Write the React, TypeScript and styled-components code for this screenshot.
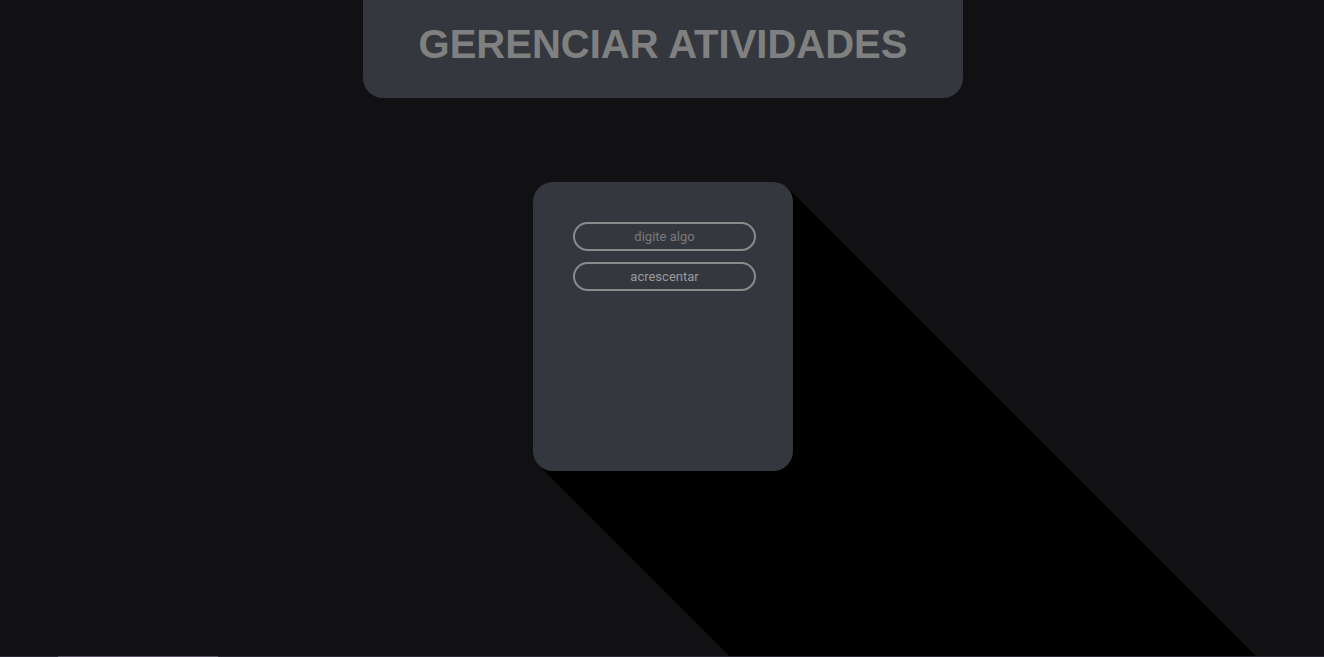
import React from "react";
import styled, { createGlobalStyle } from "styled-components";

const longShadow = Array.from({ length: 700 }, (_, i) => `${i + 1}px ${i + 1}px 0 #000`).join(", ");

const Global = createGlobalStyle`
  html, body { margin: 0; padding: 0; background: #111114; overflow: hidden; }
  body { font-family: "Liberation Sans", Arial, sans-serif; }
`;

const Page = styled.div`
  min-height: 657px;
  padding-left: 2px;
  display: flex;
  flex-direction: column;
  align-items: center;
`;

const Header = styled.header`
  width: 600px;
  height: 98px;
  background: #34383e;
  border-radius: 0 0 20px 20px;
  display: flex;
  align-items: center;
  justify-content: center;
  position: relative;
  z-index: 2;
`;

const Title = styled.h1`
  margin: 0;
  font-family: "Liberation Sans", Arial, sans-serif;
  font-weight: 700;
  font-size: 40px;
  color: #808080;
  padding-bottom: 10px;
`;

const Card = styled.div`
  margin-top: 84px;
  width: 260px;
  height: 289px;
  box-sizing: border-box;
  padding: 40px;
  background: #34383e;
  border-radius: 20px;
  display: flex;
  flex-direction: column;
  gap: 11px;
  box-shadow: ${longShadow};
`;

const Pill = styled.input`
  width: 183px;
  height: 29px;
  box-sizing: border-box;
  border: 2px solid #8a8a8a;
  border-radius: 15px;
  background: transparent;
  font-family: Roboto, "Liberation Sans", sans-serif;
  font-size: 13px;
  text-align: center;
  color: #999;
  outline: none;
  padding: 0;
  &::placeholder { color: #7a7a7a; }
`;

const PillButton = styled.button`
  width: 183px;
  height: 29px;
  box-sizing: border-box;
  border: 2px solid #8a8a8a;
  border-radius: 15px;
  background: transparent;
  font-family: Roboto, "Liberation Sans", sans-serif;
  font-size: 13px;
  color: #9a9a9a;
  padding: 0;
  cursor: pointer;
`;

const ScrollTrack = styled.div`
  position: fixed;
  left: 0;
  right: 0;
  bottom: 0;
  height: 1px;
  background: #2b2838;
  z-index: 5;
`;

const ScrollThumb = styled.div`
  margin-left: 58px;
  width: 160px;
  height: 1px;
  background: #5a5668;
`;

export default function App() {
  return (
    <>
      <Global />
      <Page>
        <Header>
          <Title>GERENCIAR ATIVIDADES</Title>
        </Header>
        <Card>
          <Pill placeholder="digite algo" />
          <PillButton>acrescentar</PillButton>
        </Card>
      </Page>
      <ScrollTrack>
        <ScrollThumb />
      </ScrollTrack>
    </>
  );
}
